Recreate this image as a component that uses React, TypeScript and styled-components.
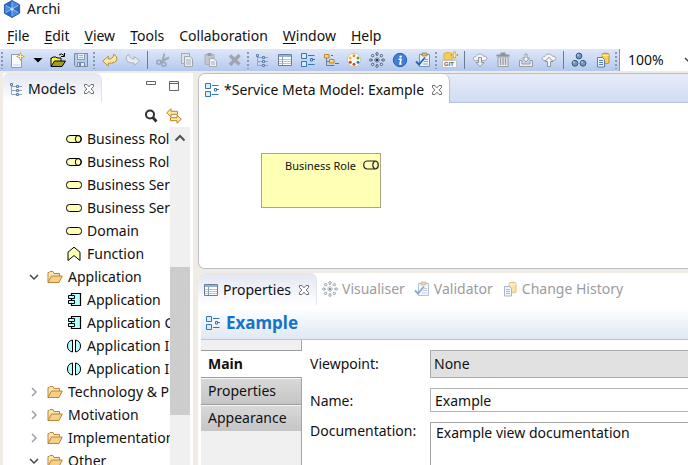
import React from 'react';
import styled, { createGlobalStyle } from 'styled-components';

const Global = createGlobalStyle`
  *, *::before, *::after { box-sizing: border-box; }
  html, body, #root { height: 100%; }
  body { margin: 0; overflow: hidden; background: #f0ece4; }
  body, button, input, select, textarea {
    font-family: "Noto Sans", "Open Sans", sans-serif;
    font-size: 14px;
    color: #111;
  }
  svg { display: block; flex: none; }
`;

/* ---------- icons ---------- */

const Svg = ({ size = 16, children }: { size?: number; children: React.ReactNode }) => (
  <svg width={size} height={size} viewBox="0 0 16 16" fill="none" aria-hidden="true">
    {children}
  </svg>
);

const LogoIcon = () => (
  <svg width="18" height="18" viewBox="0 0 18 18" aria-hidden="true">
    <path d="M9 0.5 L16.6 4.8 V13.2 L9 17.5 L1.4 13.2 V4.8 Z" fill="#2f6bc4" stroke="#2a5cae" strokeLinejoin="round" />
    <path d="M9 9 L9 1 L16 5 Z M9 9 L16 13 L9 17 Z M9 9 L2 13 V5 Z" fill="#4a8be0" />
    <path d="M9 2 V16 M3 5.5 L15 12.5 M15 5.5 L3 12.5" stroke="#8cc0f3" strokeWidth="1" />
    <circle cx="9" cy="9" r="1.6" fill="#c3e1fc" />
  </svg>
);
const NewIcon = () => (
  <Svg>
    <path d="M2.5 2.5 H10 L12.5 6 V15.5 H2.5 Z" fill="#f7fafe" stroke="#8d99ae" />
    <path d="M4 12 H11 V14 H4Z" fill="#dce8f8" />
    <path d="M11.5 0 L13 3 L16 4.5 L13 6 L11.5 9 L10 6 L7 4.5 L10 3 Z" fill="#c9a63a" />
    <path d="M11.5 2 V7 M9 4.5 H14" stroke="#fff3b0" />
  </Svg>
);
const CaretIcon = () => <Svg><path d="M3.5 6 H12.5 L8 10.5 Z" fill="#000" /></Svg>;
const OpenIcon = () => (
  <Svg>
    <path d="M1 14 V6 H2 L3 5 H6 L7 6 H11 V9" fill="#f7f35a" stroke="#000" />
    <path d="M1 14.5 L4.5 9 H15.5 L12 14.5 Z" fill="#a39d1a" stroke="#000" />
    <path d="M9 3 Q11.5 0.5 14 3.5 M14.5 1 V4.5 H11" stroke="#000" />
  </Svg>
);
const SaveIcon = () => (
  <Svg>
    <path d="M1.5 1.5 H14.5 V14.5 H2.5 L1.5 13.5 Z" fill="#b9cde8" stroke="#758bab" />
    <path d="M4.5 1.5 H11.5 V7.5 H4.5 Z" fill="#eef4fb" stroke="#8397b4" />
    <path d="M6 3.5 H10 M6 5.5 H10" stroke="#9bb0cc" />
    <path d="M4.5 10.5 H11.5 V14.5 H4.5 Z" fill="#e2ebf6" stroke="#758bab" />
    <path d="M6 11 H8 V14 H6 Z" fill="#71869f" />
  </Svg>
);
const UndoIcon = () => (
  <Svg><path d="M0.8 9 L6.3 4.2 V7 Q11 7.5 11.8 2.2 Q15 4 15 7 Q14 11.6 6.3 11.2 V14 Z" fill="#fbe7a5" stroke="#bc8d34" strokeLinejoin="round" /></Svg>
);
const RedoIcon = () => (
  <Svg><path d="M14.6 9 L9.2 4.4 V7 Q4.6 7 3.6 2.2 Q1 4 1.2 7 Q2 11.2 9.2 11 V13.6 Z" fill="#e7ebef" stroke="#a9b1bc" strokeLinejoin="round" /></Svg>
);
const CutIcon = () => (
  <Svg>
    <path d="M9.5 1.5 L7.5 9 M14 5.5 L5.5 10" stroke="#9fabbb" strokeWidth="2" />
    <circle cx="3.8" cy="10.3" r="2" stroke="#98a5b6" strokeWidth="1.5" />
    <circle cx="8.8" cy="12.3" r="2" stroke="#98a5b6" strokeWidth="1.5" />
  </Svg>
);
const CopyIcon = () => (
  <Svg>
    <path d="M2.5 1.5 H10.5 V11.5 H2.5 Z" fill="#dfe3e8" stroke="#a3aab3" />
    <path d="M5.5 4.5 H11 L13.5 7 V14.5 H5.5 Z" fill="#eceff2" stroke="#9da5af" />
    <path d="M7 8 H12 M7 10 H12 M7 12 H12" stroke="#a7aeb7" />
  </Svg>
);
const PasteIcon = () => (
  <Svg>
    <path d="M2 2.5 H11 V12.5 H2 Z" fill="#c3c6ca" stroke="#abb0b8" />
    <path d="M4.5 1 H8.5 V4 H4.5 Z" fill="#999fa8" />
    <path d="M6.5 6.5 H11 L13.5 9 V14.5 H6.5 Z" fill="#eff1f3" stroke="#a3abb5" />
    <path d="M8 10 H12 M8 12 H12" stroke="#a7aeb7" />
  </Svg>
);
const DeleteIcon = () => (
  <Svg><path d="M3 3.5 L12.5 12.5 M12.5 3 L3 13" stroke="#a0a5ad" strokeWidth="3.4" /></Svg>
);
const TreeIcon = () => (
  <Svg>
    <path d="M3.5 5 V13.5 H8 M3.5 9.5 H8 M3.5 5.5 H8" stroke="#93a6c0" />
    <path d="M2.5 2.5 H4.5 V4.5 H2.5 Z M8.5 4.5 H10.5 V6.5 H8.5 Z M8.5 8.5 H10.5 V10.5 H8.5 Z M8.5 12.5 H10.5 V14.5 H8.5 Z" fill="#cfe0f2" stroke="#5c7ea8" />
    <path d="M11 5.5 H14 M11 9.5 H14 M11 13.5 H14" stroke="#8ba4c2" />
  </Svg>
);
const TableIcon = () => (
  <Svg>
    <path d="M1.5 2.5 H14.5 V13.5 H1.5 Z" fill="#fff" stroke="#677d99" />
    <path d="M2 3 H14 V5 H2 Z" fill="#93b3d2" />
    <path d="M2 7.5 H14 M2 9.5 H14 M2 11.5 H14" stroke="#b4c5d6" />
    <path d="M5.5 5 V13" stroke="#8a9db3" />
  </Svg>
);
const ViewIcon = () => (
  <Svg>
    <path d="M1.5 1.5 H6.5 V6.5 H1.5 Z M1.5 9.5 H6.5 V14.5 H1.5 Z" fill="#d9edfb" stroke="#3476b0" />
    <path d="M8 3.5 H14.5 M10.5 6.5 H12.5 V9 H10.5 Z M12.5 7.5 H15 M8 12.5 H14.5" stroke="#3476b0" />
  </Svg>
);
const NavigatorIcon = () => (
  <Svg>
    <path d="M3.5 6 V13.5 H8 M3.5 9.5 H7" stroke="#667b91" />
    <path d="M1.5 2.5 H6 V6 H1.5 Z" fill="#fbd875" stroke="#b58931" />
    <path d="M6.5 7.5 H11 V11 H6.5 Z" fill="#fbd875" stroke="#b58931" />
    <path d="M8 3.5 H10 M12 11.5 H16 M8 13.5 H11" stroke="#436e9d" />
  </Svg>
);
const PaletteIcon = () => (
  <Svg>
    <circle cx="8" cy="8" r="6.8" fill="#fffdf0" stroke="#cfc7a7" />
    <circle cx="8" cy="3.8" r="1.5" fill="#ee8b25" /><circle cx="12" cy="6" r="1.5" fill="#4caa3c" />
    <circle cx="12" cy="10.3" r="1.5" fill="#3878c9" /><circle cx="8" cy="12.3" r="1.5" fill="#c64242" />
    <circle cx="4.2" cy="10.3" r="1.5" fill="#c64242" /><circle cx="4.2" cy="6" r="1.5" fill="#e7bd2d" />
  </Svg>
);
const spokes = [[8, 1.8], [12.4, 3.6], [14.2, 8], [12.4, 12.4], [8, 14.2], [3.6, 12.4], [1.8, 8], [3.6, 3.6]];
const VisualiserIcon = () => (
  <Svg>
    {spokes.map(([x, y]) => (
      <g key={`${x}-${y}`}>
        <path d={`M8 8 L${x} ${y}`} stroke="#55697f" strokeDasharray="1 1" />
        <circle cx={x} cy={y} r="1.2" fill="#dce8f6" stroke="#3c5066" strokeWidth="0.9" />
      </g>
    ))}
    <circle cx="8" cy="8" r="1.6" fill="#2d4258" />
  </Svg>
);
const InfoIcon = () => (
  <Svg>
    <circle cx="8" cy="8" r="6.7" fill="#3f7fd6" stroke="#2a5fb0" />
    <circle cx="8.6" cy="4.6" r="1.2" fill="#fff" />
    <path d="M6.6 7.2 H9 L8 12 H9.6" stroke="#fff" strokeWidth="1.6" />
  </Svg>
);
const ValidatorIcon = () => (
  <Svg>
    <path d="M4.5 2.5 H14.5 V14.5 H4.5 Z" fill="#eef4fb" stroke="#7490b3" />
    <path d="M7 1 H12 V4 H7 Z" fill="#d9b975" stroke="#927848" strokeWidth="0.7" />
    <path d="M10 7.5 H13 M9 9.5 H13 M8 12 H13" stroke="#86a5cb" />
    <path d="M1 9.5 L4 12.5 L10 5.5" stroke="#2467b5" strokeWidth="1.9" />
  </Svg>
);
const GitShape = styled.text`
  font: bold 6px "Liberation Sans", sans-serif;
  fill: #5d6167;
`;
const GitIcon = () => (
  <svg width="18" height="18" viewBox="0 0 18 18" fill="none" aria-hidden="true">
    <path d="M3 2.5 Q7 0.5 11 2.5 V9 H3 Z" fill="#f6ce4e" stroke="#d9b040" />
    <path d="M13.5 0.5 V7.5 M10 4 H17" stroke="#c99c2b" strokeWidth="2.2" />
    <path d="M13.5 1.5 V6.5 M11 4 H16" stroke="#fff0a6" />
    <path d="M1.5 9.5 H15.5 V16.5 H1.5 Z" fill="#fafafa" stroke="#c4c4c4" />
    <GitShape x="3" y="15">GIT</GitShape>
  </svg>
);
const Cloud = () => <path d="M3 8.5 Q0.5 8 1.2 5.8 Q2 4.4 3.8 4.6 Q5 1.4 8.3 2 Q10.6 2.2 11.4 4.2 Q14.6 3.6 15 6.3 Q14.8 8.5 12.5 8.5 Z" fill="#f5f6f8" stroke="#a4a9b2" />;
const CloudDownIcon = () => (
  <Svg><Cloud /><path d="M6.5 5.5 H9.5 V10.5 H12 L8 14.8 L4 10.5 H6.5 Z" fill="#e9ebee" stroke="#8f959f" /></Svg>
);
const CloudUpIcon = () => (
  <Svg><Cloud /><path d="M6.5 14.5 H9.5 V9.5 H12 L8 5.2 L4 9.5 H6.5 Z" fill="#f5f6f8" stroke="#8f959f" /></Svg>
);
const BinIcon = () => (
  <Svg>
    <path d="M3 5 H13 V14.5 H3 Z" fill="#eceef1" stroke="#969ba4" />
    <path d="M1.5 3.5 H14.5 M5.5 1.5 H10.5" stroke="#8f949d" strokeWidth="1.8" />
    <path d="M5.5 6 V13 M8 6 V13 M10.5 6 V13" stroke="#989da6" strokeWidth="1.4" />
  </Svg>
);
const InboxIcon = () => (
  <Svg>
    <path d="M1.5 8.5 H4 V12 H12 V8.5 H14.5 V14.5 H1.5 Z" fill="#eceef1" stroke="#969ba4" />
    <path d="M7 2 H9 V6 H11.5 L8 10 L4.5 6 H7 Z" fill="#f6f7f8" stroke="#969ba4" />
  </Svg>
);
const SpheresIcon = () => (
  <Svg>
    {[[8, 4], [4, 11.3], [12, 11.3]].map(([x, y]) => (
      <g key={x}><circle cx={x} cy={y} r="2.9" fill="#7198bb" stroke="#33587e" /><circle cx={x - 1} cy={y - 1} r="1" fill="#adc8df" /></g>
    ))}
  </Svg>
);
const HistoryIcon = () => (
  <Svg>
    <path d="M7 2 Q10.5 0 14 2 V11 Q11 12.5 8 11 Z" fill="#f8cf59" stroke="#b98f32" />
    <path d="M7 3 Q10.5 4.5 14 3" stroke="#fff1b8" />
    <path d="M2.5 5.5 H7.5 L9.5 7.5 V15 H2.5 Z" fill="#edf4fc" stroke="#5a7cab" />
    <path d="M4 8.5 H8 M4 10.5 H8 M4 12.5 H8" stroke="#557eb4" />
  </Svg>
);
const CloseIcon = () => (
  <svg width="12" height="12" viewBox="0 0 12 12" fill="none" aria-hidden="true">
    <path d="M1.5 1.5 H4 L6 3.8 L8 1.5 H10.5 V3.5 L8.2 6 L10.5 8.5 V10.5 H8 L6 8.2 L4 10.5 H1.5 V8.5 L3.8 6 L1.5 3.5 Z" fill="#fff" stroke="#6b6d72" />
  </svg>
);
const MinimiseIcon = () => <Svg><path d="M3.5 3.5 H12.5 V6.5 H3.5 Z" fill="#fff" stroke="#61646b" /></Svg>;
const MaximiseIcon = () => <Svg><path d="M3.5 3.5 H12.5 V12.5 H3.5 Z M3.5 5.5 H12.5" fill="#fff" stroke="#61646b" /></Svg>;
const SearchIcon = () => (
  <Svg><circle cx="7" cy="6.5" r="4" stroke="#2f2f2f" strokeWidth="2" /><path d="M9.8 9.5 L13.5 13.5" stroke="#2f2f2f" strokeWidth="2.8" /></Svg>
);
const LinkIcon = () => (
  <Svg>
    <path d="M0.7 4.8 L5 0.8 V3.3 H11.5 V6.3 H5 V8.8 Z" fill="#fdeba0" stroke="#bb8325" />
    <path d="M15.3 11.2 L11 7.2 V9.7 H4.5 V12.7 H11 V15.2 Z" fill="#fdeba0" stroke="#bb8325" />
  </Svg>
);
const RoleIcon = () => (
  <Svg>
    <path d="M4 4.5 H12 A3.5 3.5 0 0 1 12 11.5 H4 A3.5 3.5 0 0 1 4 4.5 Z" fill="#ffffb5" stroke="#000" />
    <ellipse cx="12.2" cy="8" rx="2.9" ry="3.5" stroke="#000" />
  </Svg>
);
const ServiceIcon = () => (
  <Svg><rect x="0.5" y="4.5" width="15" height="7" rx="3" fill="#ffffb5" stroke="#000" /></Svg>
);
const FunctionIcon = () => (
  <Svg><path d="M2 6.2 L8 1.2 L14 6.2 V14.5 L8 9.6 L2 14.5 Z" fill="#ffffb5" stroke="#000" /></Svg>
);
const ComponentIcon = () => (
  <Svg>
    <path d="M5.5 1.5 H14.5 V13.5 H5.5 Z" fill="#b5ffff" stroke="#000" strokeWidth="1.2" />
    <path d="M2.5 3.5 H8.5 V6.5 H2.5 Z M2.5 8.5 H8.5 V11.5 H2.5 Z" fill="#b5ffff" stroke="#000" />
  </Svg>
);
const InteractionIcon = () => (
  <Svg>
    <path d="M6.5 2 V14 Q1.5 13 1.5 8 Q1.5 3 6.5 2 Z M9.5 2 V14 Q14.5 13 14.5 8 Q14.5 3 9.5 2 Z" fill="#b5ffff" stroke="#000" />
  </Svg>
);
const FolderIcon = () => (
  <Svg>
    <path d="M1 13.5 V3.5 H2 L3 2.5 H6 L7 4.5 H12.5 V7" fill="#fbe3ac" stroke="#b9853c" />
    <path d="M1 13.5 L4.5 7 H15.3 L12 13.5 Z" fill="#f8cf86" stroke="#b9853c" strokeLinejoin="round" />
  </Svg>
);
const OutlineRoleIcon = () => (
  <Svg>
    <path d="M4 4 H12.5 Q15.3 4.5 15.3 8 Q15.3 11.5 12.5 12 H4 Q0.7 11.5 0.7 8 Q0.7 4.5 4 4 Z M12.3 4 Q9.8 5 9.8 8 Q9.8 11 12.3 12" stroke="#222" strokeWidth="1.2" />
  </Svg>
);
const ChevronDown = ({ color = '#444' }: { color?: string }) => (
  <Svg><path d="M4 6 L8 10 L12 6" stroke={color} strokeWidth="1.5" /></Svg>
);
const ChevronRight = () => <Svg><path d="M6 4 L10 8 L6 12" stroke="#a0a0a0" strokeWidth="1.5" /></Svg>;
const ChevronUp = () => <Svg><path d="M3.5 10.5 L8 6 L12.5 10.5" stroke="#505050" strokeWidth="2" /></Svg>;

/* ---------- window frame ---------- */

const Window = styled.div`
  display: flex;
  flex-direction: column;
  height: 100%;
  overflow: hidden;
`;
const TitleBar = styled.header`
  display: flex;
  align-items: center;
  gap: 6px;
  height: 23px;
  padding: 0 3px 6px;
  background: #fff;
`;
const Title = styled.h1`
  margin: 0;
  font-size: 14px;
  line-height: 17px;
  font-weight: 400;
`;
const MenuBar = styled.nav`
  display: flex;
  gap: 15px;
  height: 26px;
  padding: 0 7px;
  background: #fff;
`;
const MenuButton = styled.button`
  padding: 0;
  border: 0;
  background: none;
  line-height: 26px;
  u { text-underline-offset: 2px; }
`;
const ToolBar = styled.div`
  display: flex;
  align-items: center;
  flex: none;
  height: 22px;
  background: linear-gradient(#dfe8f9, #b3c8ef);
  overflow: hidden;
`;
const ToolButton = styled.button<{ $width?: number }>`
  display: flex;
  align-items: center;
  justify-content: center;
  flex: none;
  width: ${(p) => p.$width ?? 23}px;
  height: 22px;
  padding: 0;
  border: 0;
  background: none;
`;
const Grip = styled.span<{ $width?: number }>`
  flex: none;
  width: ${(p) => p.$width ?? 4}px;
  height: 18px;
  background: radial-gradient(circle at 1px 2px, #8b97ab 1px, transparent 1px) 1px 0 / 100% 4px repeat-y;
`;
const Separator = styled.span`
  flex: none;
  width: 7px;
  height: 18px;
  background: linear-gradient(#6b7a96, #6b7a96) center / 1px 100% no-repeat;
`;
const ZoomBox = styled.div`
  display: flex;
  align-items: center;
  flex: 1;
  min-width: 0;
  height: 22px;
  padding-left: 8px;
  border-left: 1px solid #8a94a6;
  background: #fff;
`;
const ZoomInput = styled.input`
  flex: none;
  width: 53px;
  padding: 0;
  border: 0;
  background: none;
  line-height: 20px;
`;

const Workbench = styled.main`
  display: grid;
  grid-template-columns: 190px minmax(0, 1fr);
  gap: 5px;
  flex: 1;
  min-height: 0;
  padding: 2px 0 0 3px;
`;
const Side = styled.aside`
  display: flex;
  flex-direction: column;
  min-height: 0;
  border-radius: 6px 6px 0 0;
  background: #fff;
`;
const Column = styled.div`
  display: grid;
  grid-template-rows: minmax(0, 51fr) minmax(0, 50fr);
  gap: 4px;
  min-height: 0;
`;
const Panel = styled.section`
  display: flex;
  flex-direction: column;
  min-height: 0;
  border: 1px solid #b9bdc9;
  border-right: 0;
  border-radius: 7px 0 0 7px;
  background: #fff;
  overflow: hidden;
`;
const PropertyPanel = styled(Panel)`
  border: 0;
  border-radius: 7px 0 0 0;
`;
const TabStrip = styled.div<{ $active?: boolean; $tall?: boolean }>`
  display: flex;
  flex: none;
  height: ${(p) => (p.$tall ? 32 : 29)}px;
  border-bottom: ${(p) => (p.$active ? '1px solid #b9c3dc' : '0')};
  background: ${(p) => (p.$active ? 'linear-gradient(#e7ecf9, #d0dcf3)' : '#fff')};
`;
const Tab = styled.div<{ $look: 'editor' | 'view' | 'idle' }>`
  display: flex;
  align-items: center;
  flex: none;
  gap: 4px;
  margin-bottom: ${(p) => (p.$look === 'editor' ? -1 : 0)}px;
  padding: ${(p) => (p.$look === 'idle' ? '0 4px 0 5px' : '2px 6px 0 5px')};
  border-radius: 6px 7px 0 0;
  line-height: 20px;
  white-space: nowrap;
  color: ${(p) => (p.$look === 'idle' ? '#9b9ba0' : '#111')};
  background: ${(p) => (p.$look === 'view' ? 'linear-gradient(#e3e6f2, #fff)' : '#fff')};
  border-right: ${(p) => (p.$look === 'idle' ? '0' : p.$look === 'view' ? '1px solid #e1e3ea' : '1px solid #b9bfd2')};
  svg { opacity: ${(p) => (p.$look === 'idle' ? 0.55 : 1)}; }
`;
const TabLabel = styled.button`
  padding: 0;
  border: 0;
  background: none;
  color: inherit;
`;
const IconButton = styled.button`
  display: flex;
  flex: none;
  padding: 0;
  border: 0;
  background: none;
`;
const TabClose = styled(IconButton)`
  margin-left: 3px;
`;
const StripTools = styled.div`
  display: flex;
  gap: 7px;
  margin-left: auto;
  padding: 5px 11px 0 0;
`;
const ViewTools = styled.div`
  display: flex;
  justify-content: flex-end;
  gap: 7px;
  flex: none;
  height: 25px;
  padding: 6px 11px 0 0;
`;

/* ---------- model tree ---------- */

const TreeArea = styled.div`
  display: flex;
  flex: 1;
  min-height: 0;
  padding-right: 3px;
`;
const Tree = styled.ul`
  flex: 1;
  min-width: 0;
  margin: 0;
  padding: 0;
  list-style: none;
  overflow: hidden;
`;
const TreeRow = styled.li<{ $leaf?: boolean }>`
  display: flex;
  align-items: center;
  gap: 5px;
  height: 23px;
  padding-left: ${(p) => (p.$leaf ? 63 : 23)}px;
  white-space: nowrap;
  line-height: 23px;
`;
const ScrollTrack = styled.div`
  display: flex;
  flex-direction: column;
  flex: none;
  width: 20px;
  background: #f0f0f0;
`;
const ScrollStep = styled.button`
  display: flex;
  justify-content: center;
  padding: 3px 0;
  border: 0;
  background: none;
`;
const Spacer = styled.div<{ $grow: number }>`
  flex: ${(p) => p.$grow} 1 0;
`;
const Thumb = styled.div`
  flex: 148 1 0;
  background: #cdcdcd;
`;

/* ---------- diagram ---------- */

const Canvas = styled.div`
  position: relative;
  flex: 1;
  background: #fff;
`;
const Node = styled.div`
  position: absolute;
  left: 62px;
  top: 50px;
  display: flex;
  justify-content: flex-end;
  align-items: flex-start;
  gap: 7px;
  width: 120px;
  height: 55px;
  padding: 3px 1px;
  border: 1px solid #a9a97c;
  background: #ffffb5;
  font-size: 11px;
  line-height: 18px;
`;

/* ---------- properties ---------- */

const Heading = styled.div`
  display: flex;
  align-items: center;
  gap: 5px;
  flex: none;
  height: 35px;
  margin-left: 3px;
  padding: 3px 4px 0;
  border-bottom: 1px solid #b7c5d9;
  background: linear-gradient(#fff 10%, #dfe8f4);
`;
const HeadingText = styled.h2`
  margin: 0;
  font-size: 17px;
  line-height: 24px;
  font-weight: 700;
  color: #1674c8;
`;
const PropertyBody = styled.div`
  display: flex;
  flex: 1;
  min-height: 0;
  margin-left: 3px;
`;
const SideTabs = styled.div`
  display: flex;
  flex-direction: column;
  flex: none;
  width: 101px;
  padding-top: 10px;
  background: linear-gradient(#a5a5a5, #a5a5a5) right / 1px 100% no-repeat #f0f0f0;
`;
const SideTab = styled.button<{ $selected?: boolean }>`
  height: 27px;
  padding: 0 7px;
  border: 0;
  border-top: 1px solid #9d9d9d;
  border-right: ${(p) => (p.$selected ? '0' : '1px solid #a5a5a5')};
  background: ${(p) => (p.$selected ? '#fff' : 'linear-gradient(#d9d9d9, #c5c5c5)')};
  box-shadow: ${(p) => (p.$selected ? 'none' : 'inset 0 1px #f6f6f6')};
  font-weight: ${(p) => (p.$selected ? 700 : 400)};
  line-height: 24px;
  text-align: left;
`;
const Form = styled.form`
  display: grid;
  grid-template-columns: 112px minmax(0, 1fr);
  grid-template-rows: 28px 24px minmax(0, 1fr);
  gap: 10px 8px;
  flex: 1;
  min-width: 0;
  padding: 10px 0 0 8px;
`;
const Label = styled.label`
  line-height: 26px;
`;
const FieldLabel = styled(Label)`
  padding-top: 1px;
`;
const AreaLabel = styled(Label)`
  line-height: 18px;
`;
const Select = styled.select`
  appearance: none;
  padding: 0 3px;
  border: 1px solid #adadad;
  border-right: 0;
  border-radius: 0;
  background: #e1e1e1;
`;
const TextInput = styled.input`
  min-width: 0;
  padding: 1px 4px 0;
  border: 1px solid #b3b3b3;
  border-right: 0;
`;
const TextArea = styled.textarea`
  min-width: 0;
  padding: 0 5px;
  border: 1px solid #a5a5a5;
  border-width: 1px 0 0 1px;
  line-height: 20px;
  resize: none;
  outline: 0;
`;

type Tool = { name: string; icon: React.ReactNode; width?: number };
const fileTools: Tool[] = [
  { name: 'New', icon: <NewIcon />, width: 24 },
  { name: 'New options', icon: <CaretIcon />, width: 17 },
  { name: 'Open', icon: <OpenIcon /> },
  { name: 'Save', icon: <SaveIcon /> },
];
const historyTools: Tool[] = [
  { name: 'Undo', icon: <UndoIcon /> },
  { name: 'Redo', icon: <RedoIcon /> },
];
const editTools: Tool[] = [
  { name: 'Cut', icon: <CutIcon />, width: 24 },
  { name: 'Copy', icon: <CopyIcon />, width: 24 },
  { name: 'Paste', icon: <PasteIcon />, width: 24 },
  { name: 'Delete', icon: <DeleteIcon /> },
];
const viewTools: Tool[] = [
  { name: 'Models', icon: <TreeIcon /> },
  { name: 'Properties', icon: <TableIcon /> },
  { name: 'Outline', icon: <ViewIcon /> },
  { name: 'Navigator', icon: <NavigatorIcon /> },
  { name: 'Palette', icon: <PaletteIcon /> },
  { name: 'Visualiser', icon: <VisualiserIcon /> },
  { name: 'Hints', icon: <InfoIcon /> },
  { name: 'Validator', icon: <ValidatorIcon /> },
];
const repositoryTools: Tool[] = [
  { name: 'Refresh model', icon: <CloudDownIcon /> },
  { name: 'Discard changes', icon: <BinIcon /> },
  { name: 'Commit', icon: <InboxIcon /> },
  { name: 'Publish', icon: <CloudUpIcon /> },
];
const collaborationTools: Tool[] = [
  { name: 'Collaboration', icon: <SpheresIcon />, width: 24 },
  { name: 'Change history', icon: <HistoryIcon /> },
];

const Tools = ({ items }: { items: Tool[] }) => (
  <>
    {items.map((t) => (
      <ToolButton key={t.name} aria-label={t.name} $width={t.width}>{t.icon}</ToolButton>
    ))}
  </>
);

const menus = [['F', 'ile'], ['E', 'dit'], ['V', 'iew'], ['T', 'ools'], ['', 'Collaboration'], ['W', 'indow'], ['H', 'elp']];

type Row = { label: string; icon: React.ReactNode; open?: boolean; leaf?: boolean };
const rows: Row[] = [
  { label: 'Business Role', icon: <RoleIcon />, leaf: true },
  { label: 'Business Role', icon: <RoleIcon />, leaf: true },
  { label: 'Business Service', icon: <ServiceIcon />, leaf: true },
  { label: 'Business Service', icon: <ServiceIcon />, leaf: true },
  { label: 'Domain', icon: <ServiceIcon />, leaf: true },
  { label: 'Function', icon: <FunctionIcon />, leaf: true },
  { label: 'Application', icon: <FolderIcon />, open: true },
  { label: 'Application', icon: <ComponentIcon />, leaf: true },
  { label: 'Application Component', icon: <ComponentIcon />, leaf: true },
  { label: 'Application Interaction', icon: <InteractionIcon />, leaf: true },
  { label: 'Application Interaction', icon: <InteractionIcon />, leaf: true },
  { label: 'Technology & Physical', icon: <FolderIcon /> },
  { label: 'Motivation', icon: <FolderIcon /> },
  { label: 'Implementation & Migration', icon: <FolderIcon /> },
  { label: 'Other', icon: <FolderIcon />, open: true },
];

export default function App() {
  return (
    <Window>
      <Global />
      <TitleBar>
        <LogoIcon />
        <Title>Archi</Title>
      </TitleBar>
      <MenuBar>
        {menus.map(([key, rest]) => (
          <MenuButton key={rest}>{key && <u>{key}</u>}{rest}</MenuButton>
        ))}
      </MenuBar>
      <ToolBar role="toolbar">
        <Grip $width={5} />
        <Tools items={fileTools} />
        <Grip $width={6} />
        <Tools items={historyTools} />
        <Separator />
        <Tools items={editTools} />
        <Grip />
        <Tools items={viewTools} />
        <Grip />
        <Tools items={[{ name: 'Git', icon: <GitIcon /> }]} />
        <Separator />
        <Tools items={repositoryTools} />
        <Separator />
        <Tools items={collaborationTools} />
        <Grip $width={5} />
        <ZoomBox>
          <ZoomInput aria-label="Zoom" defaultValue="100%" />
          <IconButton aria-label="Zoom levels"><ChevronDown /></IconButton>
        </ZoomBox>
      </ToolBar>

      <Workbench>
        <Side>
          <TabStrip>
            <Tab $look="view">
              <TreeIcon />
              <TabLabel>Models</TabLabel>
              <TabClose aria-label="Close Models"><CloseIcon /></TabClose>
            </Tab>
            <StripTools>
              <IconButton aria-label="Minimise"><MinimiseIcon /></IconButton>
              <IconButton aria-label="Maximise"><MaximiseIcon /></IconButton>
            </StripTools>
          </TabStrip>
          <ViewTools>
            <IconButton aria-label="Search"><SearchIcon /></IconButton>
            <IconButton aria-label="Link to view"><LinkIcon /></IconButton>
          </ViewTools>
          <TreeArea>
            <Tree>
              {rows.map((r, i) => (
                <TreeRow key={i} $leaf={r.leaf}>
                  {!r.leaf && (
                    <IconButton aria-label={`Toggle ${r.label}`}>{r.open ? <ChevronDown /> : <ChevronRight />}</IconButton>
                  )}
                  {r.icon}
                  {r.label}
                </TreeRow>
              ))}
            </Tree>
            <ScrollTrack>
              <ScrollStep aria-label="Scroll up"><ChevronUp /></ScrollStep>
              <Spacer $grow={118} />
              <Thumb />
              <Spacer $grow={50} />
            </ScrollTrack>
          </TreeArea>
        </Side>

        <Column>
          <Panel>
            <TabStrip $active>
              <Tab $look="editor">
                <ViewIcon />
                <TabLabel>*Service Meta Model: Example</TabLabel>
                <TabClose aria-label="Close editor"><CloseIcon /></TabClose>
              </Tab>
            </TabStrip>
            <Canvas>
              <Node>Business Role<OutlineRoleIcon /></Node>
            </Canvas>
          </Panel>

          <PropertyPanel>
            <TabStrip $tall>
              <Tab $look="view">
                <TableIcon />
                <TabLabel>Properties</TabLabel>
                <TabClose aria-label="Close Properties"><CloseIcon /></TabClose>
              </Tab>
              <Tab $look="idle"><VisualiserIcon /><TabLabel>Visualiser</TabLabel></Tab>
              <Tab $look="idle"><ValidatorIcon /><TabLabel>Validator</TabLabel></Tab>
              <Tab $look="idle"><HistoryIcon /><TabLabel>Change History</TabLabel></Tab>
            </TabStrip>
            <Heading>
              <ViewIcon />
              <HeadingText>Example</HeadingText>
            </Heading>
            <PropertyBody>
              <SideTabs>
                <SideTab $selected>Main</SideTab>
                <SideTab>Properties</SideTab>
                <SideTab>Appearance</SideTab>
              </SideTabs>
              <Form>
                <FieldLabel htmlFor="viewpoint">Viewpoint:</FieldLabel>
                <Select id="viewpoint" defaultValue="None"><option>None</option></Select>
                <Label htmlFor="name">Name:</Label>
                <TextInput id="name" defaultValue="Example" />
                <AreaLabel htmlFor="documentation">Documentation:</AreaLabel>
                <TextArea id="documentation" defaultValue="Example view documentation" />
              </Form>
            </PropertyBody>
          </PropertyPanel>
        </Column>
      </Workbench>
    </Window>
  );
}
